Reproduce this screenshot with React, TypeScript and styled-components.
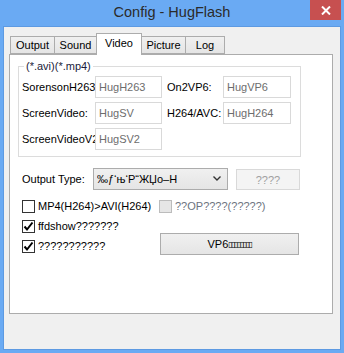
import React from "react";
import styled, { createGlobalStyle } from "styled-components";

const GlobalStyle = createGlobalStyle`
  html, body { margin: 0; padding: 0; }
  body {
    font-family: "Liberation Sans", Arial, sans-serif;
    font-size: 11px;
    color: #000;
  }
`;

const Window = styled.div`
  width: 344px;
  height: 353px;
  box-sizing: border-box;
  background: #6aaaf3;
  padding: 0 3px 3px;
  display: flex;
  flex-direction: column;
`;

const TitleBar = styled.div`
  height: 26px;
  flex: none;
  display: grid;
  grid-template-columns: 1fr auto 1fr;
`;

const Title = styled.div`
  grid-column: 2;
  padding-top: 3px;
  line-height: 18px;
  font-size: 14.5px;
  color: #2b2b2b;
  white-space: nowrap;
`;

const CloseButton = styled.div`
  grid-column: 3;
  justify-self: end;
  width: 31px;
  height: 20px;
  background: #c75050;
  display: flex;
  align-items: center;
  justify-content: center;
`;

const Client = styled.div`
  flex: 1;
  background: #f0f0f0;
  padding: 7px 8px 0 6px;
  display: flex;
  flex-direction: column;
  box-shadow: inset 1px 0 0 #5d9ae2, inset -1px 0 0 #5d9ae2, inset 0 -1px 0 #5d9ae2, inset 0 1px 0 #5d9ae2;
`;

const TabRow = styled.div`
  display: flex;
  align-items: flex-end;
  height: 21px;
  padding-left: 1px;
`;

const Tab = styled.div<{ $w: number; $active?: boolean }>`
  box-sizing: border-box;
  width: ${p => p.$w}px;
  height: ${p => (p.$active ? 22 : 18)}px;
  margin-right: -1px;
  margin-bottom: ${p => (p.$active ? -1 : 0)}px;
  border: 1px solid #acacac;
  border-bottom: ${p => (p.$active ? "none" : "1px solid #acacac")};
  background: ${p => (p.$active ? "#fff" : "linear-gradient(#f0f0f0, #e5e5e5)")};
  position: relative;
  z-index: ${p => (p.$active ? 1 : 0)};
  text-align: center;
  line-height: ${p => (p.$active ? 18 : 16)}px;
  white-space: nowrap;
`;

const Panel = styled.div`
  box-sizing: border-box;
  height: 260px;
  border: 1px solid #acacac;
  background: #fff;
  display: flex;
  flex-direction: column;
  padding: 0 0 0 8px;
`;

const Group = styled.fieldset`
  box-sizing: border-box;
  width: 283px;
  margin: 4px 0 0 0;
  padding: 3px 0 6px 3px;
  border: 1px solid #dcdcdc;
  min-inline-size: 0;
`;

const GroupLabel = styled.legend`
  padding: 0 2px;
  margin-left: 2px;
  line-height: 14px;
  color: #1b1b3a;
`;

const FieldGrid = styled.div`
  display: grid;
  grid-template-columns: 73px 72px 56px 68px;
  grid-auto-rows: 22px;
  row-gap: 4px;
`;

const FieldLabel = styled.div`
  line-height: 22px;
  white-space: nowrap;
  overflow: hidden;
`;

const TextBox = styled.div<{ $w: number }>`
  box-sizing: border-box;
  width: ${p => p.$w}px;
  height: 22px;
  border: 1px solid #d9d9d9;
  background: #fff;
  color: #6d6d6d;
  padding-left: 3px;
  line-height: 20px;
  white-space: nowrap;
`;

const TypeRow = styled.div`
  display: flex;
  align-items: center;
  margin-top: 10px;
  padding-left: 4px;
`;

const TypeLabel = styled.div`
  width: 71px;
  line-height: 22px;
`;

const Select = styled.div`
  box-sizing: border-box;
  width: 135px;
  height: 22px;
  border: 1px solid #acacac;
  background: linear-gradient(#f0f0f0, #e5e5e5);
  display: flex;
  align-items: center;
  justify-content: space-between;
  padding: 0 6px 0 3px;
  white-space: nowrap;
`;

const SelectText = styled.span`
  overflow: hidden;
  width: 110px;
`;

const Button = styled.div<{ $disabled?: boolean; $w: number }>`
  box-sizing: border-box;
  width: ${p => p.$w}px;
  height: ${p => (p.$disabled ? 21 : 22)}px;
  border: 1px solid ${p => (p.$disabled ? "#d9d9d9" : "#acacac")};
  background: ${p => (p.$disabled ? "#f4f4f4" : "linear-gradient(#f0f0f0, #e5e5e5)")};
  color: ${p => (p.$disabled ? "#a0a0a0" : "#000")};
  display: flex;
  align-items: center;
  justify-content: center;
  white-space: nowrap;
`;

const TypeButton = styled(Button)`
  margin-left: 8px;
  margin-top: 2px;
`;

const CheckGrid = styled.div`
  display: grid;
  grid-template-columns: 137px 139px;
  grid-template-rows: repeat(3, 20px);
  margin-top: 6px;
  padding-left: 4px;
`;

const CheckItem = styled.label<{ $disabled?: boolean }>`
  display: flex;
  align-items: center;
  gap: 3px;
  white-space: nowrap;
  color: ${p => (p.$disabled ? "#6d7380" : "#000")};
`;

const Box = styled.span<{ $disabled?: boolean }>`
  box-sizing: border-box;
  width: 13px;
  height: 13px;
  border: 1px solid ${p => (p.$disabled ? "#bcbcbc" : "#333")};
  background: ${p => (p.$disabled ? "#e6e6e6" : "#fff")};
  display: flex;
  align-items: center;
  justify-content: center;
`;

const BigButtonCell = styled.div`
  grid-column: 2;
  grid-row: 2 / 4;
  align-self: end;
  margin: 0 0 1px 1px;
`;

const Tofu = styled.span`
  font-family: "DejaVu Sans", sans-serif;
  font-size: 8px;
  letter-spacing: -1.5px;
`;

const Check = () => (
  <svg width="11" height="11" viewBox="0 0 11 11">
    <path d="M1.5 5.5 L4 8.5 L9.5 1.5" fill="none" stroke="#000" strokeWidth="2" />
  </svg>
);

const CheckBox = ({ checked, disabled, children }: { checked?: boolean; disabled?: boolean; children: React.ReactNode }) => (
  <CheckItem $disabled={disabled}>
    <Box $disabled={disabled}>{checked && <Check />}</Box>
    {children}
  </CheckItem>
);

export default function App() {
  return (
    <>
      <GlobalStyle />
      <Window>
        <TitleBar>
          <Title>Config - HugFlash</Title>
          <CloseButton>
            <svg width="10" height="9" viewBox="0 0 10 9">
              <path d="M1 0.5 L9 8.5 M9 0.5 L1 8.5" stroke="#fff" strokeWidth="2" />
            </svg>
          </CloseButton>
        </TitleBar>
        <Client>
          <TabRow>
            <Tab $w={45}>Output</Tab>
            <Tab $w={43}>Sound</Tab>
            <Tab $w={46} $active>Video</Tab>
            <Tab $w={45}>Picture</Tab>
            <Tab $w={40}>Log</Tab>
          </TabRow>
          <Panel>
            <Group>
              <GroupLabel>(*.avi)(*.mp4)</GroupLabel>
              <FieldGrid>
                <FieldLabel>SorensonH263</FieldLabel>
                <TextBox $w={67}>HugH263</TextBox>
                <FieldLabel>On2VP6:</FieldLabel>
                <TextBox $w={68}>HugVP6</TextBox>
                <FieldLabel>ScreenVideo:</FieldLabel>
                <TextBox $w={67}>HugSV</TextBox>
                <FieldLabel>H264/AVC:</FieldLabel>
                <TextBox $w={68}>HugH264</TextBox>
                <FieldLabel>ScreenVideoV2</FieldLabel>
                <TextBox $w={67}>HugSV2</TextBox>
              </FieldGrid>
            </Group>
            <TypeRow>
              <TypeLabel>Output Type:</TypeLabel>
              <Select>
                <SelectText>‰ƒ‘њ‘Р“ЖЏо–Н</SelectText>
                <svg width="8" height="5" viewBox="0 0 8 5">
                  <path d="M0.5 0.5 L4 4 L7.5 0.5" fill="none" stroke="#333" strokeWidth="1.4" />
                </svg>
              </Select>
              <TypeButton $w={64} $disabled>????</TypeButton>
            </TypeRow>
            <CheckGrid>
              <CheckBox>MP4(H264)&gt;AVI(H264)</CheckBox>
              <CheckBox disabled>??OP????(?????)</CheckBox>
              <CheckBox checked>ffdshow???????</CheckBox>
              <BigButtonCell>
                <Button $w={139}>
                  VP6<Tofu>▯▯▯▯▯▯▯▯</Tofu>
                </Button>
              </BigButtonCell>
              <CheckBox checked>???????????</CheckBox>
            </CheckGrid>
          </Panel>
        </Client>
      </Window>
    </>
  );
}
